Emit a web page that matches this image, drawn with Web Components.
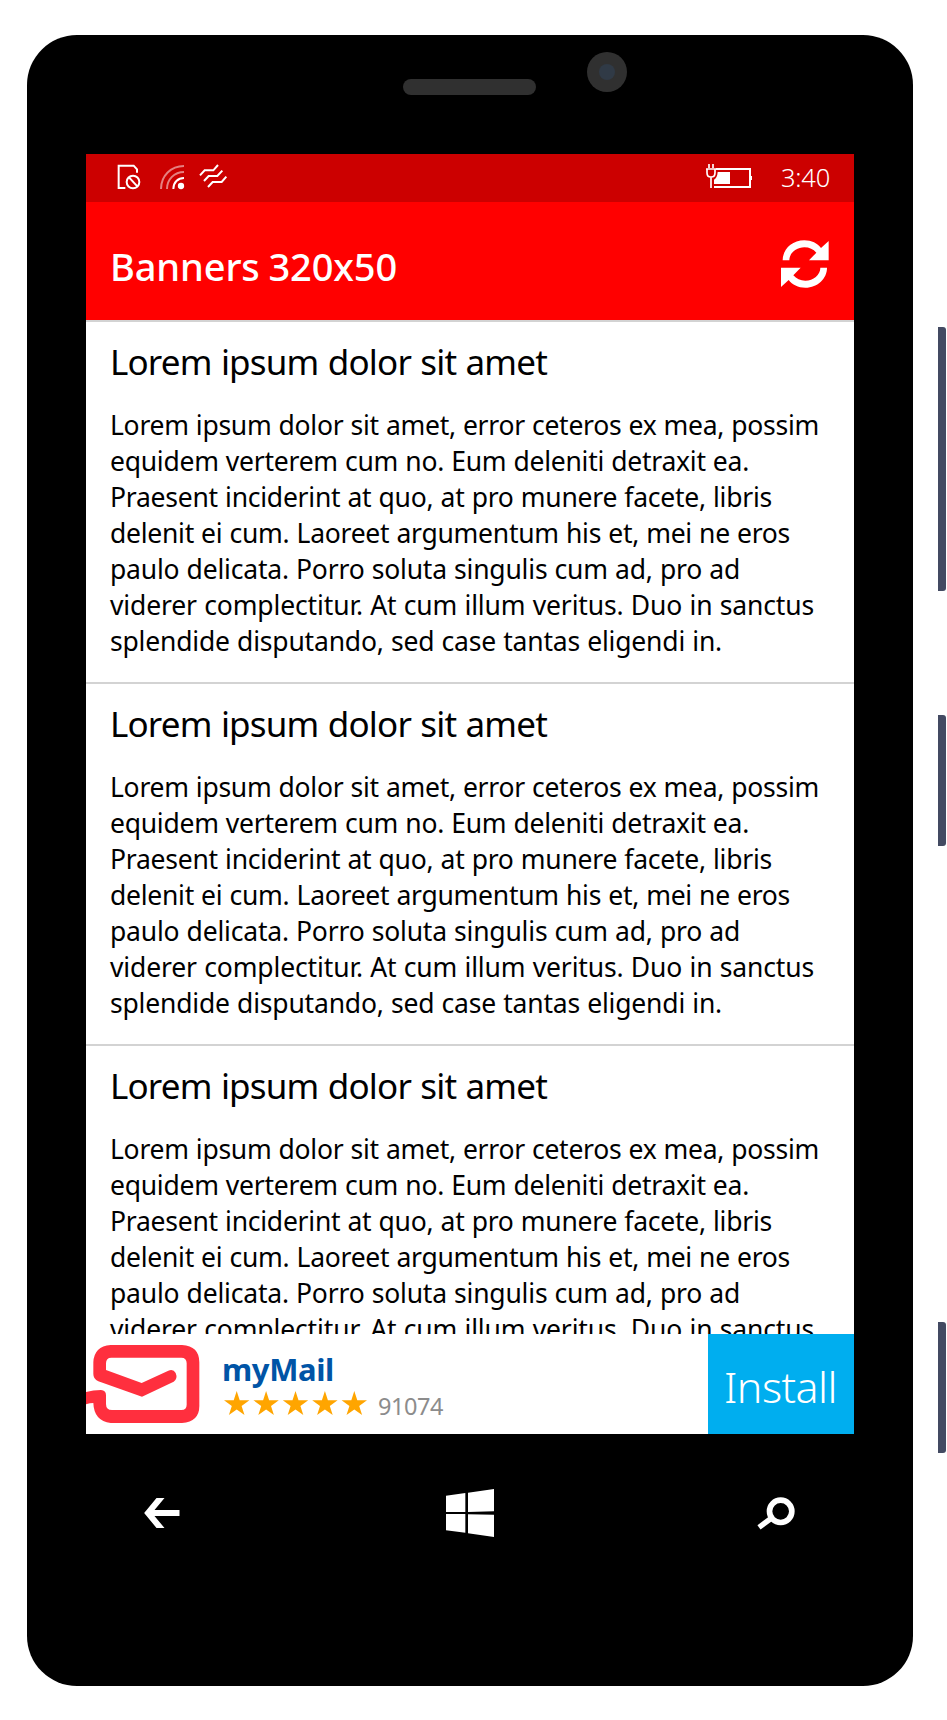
<!DOCTYPE html>
<html lang="en">
<head>
<meta charset="utf-8">
<title>Banners 320x50</title>
<style>
  body { margin: 0; background: #fff; font-family: "Noto Sans", "Open Sans", sans-serif; }
</style>
</head>
<body>
<phone-device>
  <status-bar></status-bar>
  <app-bar><fit-text width="287">Banners 320x50</fit-text></app-bar>
  <article-list>
    <article-card></article-card>
    <article-card></article-card>
    <article-card short></article-card>
  </article-list>
  <ad-banner>
    <fit-text slot="name" width="112">myMail</fit-text>
    <fit-text slot="votes" width="65">91074</fit-text>
    <fit-text slot="action" width="113">Install</fit-text>
  </ad-banner>
</phone-device>
<script>
function define(name, html, ready) {
  const template = document.createElement('template');
  template.innerHTML = html;
  customElements.define(name, class extends HTMLElement {
    constructor() {
      super();
      this.attachShadow({ mode: 'open' }).append(template.content.cloneNode(true));
    }
    connectedCallback() { if (ready) ready(this); }
  });
}

define('phone-device', `
  <style>
    :host { display: flex; align-items: flex-start; width: 947px; height: 1720px; box-sizing: border-box; padding: 35px 0 0 27px; overflow: hidden; }
    .body { width: 886px; height: 1651px; flex: none; border-radius: 50px; background: #000; display: flex; flex-direction: column; }
    .top { height: 119px; display: flex; align-items: flex-start; padding-left: 376px; flex: none; }
    .speaker { width: 133px; height: 16px; border-radius: 8px; background: #303030; margin-top: 44px; }
    .camera { width: 40px; height: 40px; border-radius: 50%; background: #303030; margin: 17px 0 0 51px; display: grid; place-items: center; }
    .camera i { width: 16px; height: 16px; border-radius: 50%; background: #303a46; }
    .screen { width: 768px; height: 1280px; margin-left: 59px; background: #fff; display: flex; flex-direction: column; overflow: hidden; flex: none; }
    .keys { width: 8px; margin-left: 25px; display: flex; flex-direction: column; padding-top: 292px; }
    .keys i { background: #434a62; border-radius: 0 3px 3px 0; height: 131px; }
    .keys i:nth-child(1) { height: 264px; }
    .keys i:nth-child(2) { margin: 124px 0 476px; }
  </style>
  <div class="body">
    <div class="top"><div class="speaker"></div><div class="camera"><i></i></div></div>
    <div class="screen"><slot></slot></div>
    <nav-keys></nav-keys>
  </div>
  <div class="keys"><i></i><i></i><i></i></div>`);

define('status-bar', `
  <style>
    :host { display: flex; height: 48px; flex: none; background: #c00; color: #fff; justify-content: space-between; }
    svg { display: block; flex: none; }
    .right { display: flex; }
    fit-text { font-size: 25.5px; line-height: 36px; margin: 5px 24px 0 28px; font-weight: 350; }
  </style>
  <svg width="150" height="48" viewBox="18 27 450 144" fill="none" stroke="#fff" stroke-width="6">
    <path d="M136 129H116V62H161L171 73V83"/>
    <circle cx="159" cy="111" r="19"/><path d="M147 97L172 124"/>
    <g stroke-width="6"><path d="M280 132C280 112 294 99 312 99"/><g opacity=".5"><path d="M261 132C261 103 283 81 312 81"/><path d="M243 132C243 92 273 63 312 63"/></g></g>
    <circle cx="303" cy="123" r="9.500" fill="#fff" stroke="none"/>
    <path d="M360 91L374 76H400L414 60M372 108L386 93H412L427 77M384 126L398 111H425L439 95"/>
  </svg>
  <div class="right">
    <svg width="48" height="48" viewBox="45 12 144 144" fill="none" stroke="#fff" stroke-width="6">
      <path d="M78 57H180V111H72"/><path d="M183 78V90" />
      <path d="M120 66V102H72V89Q82 83 83 66Z" fill="#fff" stroke="none"/>
      <path d="M57 42V54M69 42V54M48 57H78M51 57V68Q51 81 63 81Q75 81 75 68V57M63 81V114" stroke-width="5"/>
    </svg>
    <fit-text width="49">3:40</fit-text>
  </div>`);

define('app-bar', `
  <style>
    :host { display: flex; height: 118px; flex: none; box-sizing: border-box; padding: 23px 25px 0 24px; justify-content: space-between; background: #f00; color: #fff; }
    .title { margin-top: 16px; font-size: 38px; line-height: 50px; font-weight: 550; word-spacing: -1px; }
    svg { display: block; margin-top: 15px; }
  </style>
  <div class="title"><slot></slot></div>
  <svg width="48" height="48" viewBox="273 271 144 144" fill="#fff"><defs><path id="a" d="M278 332C278 300 305 272 343 272C365 272 382 281 393 295L416 274V332H357L379 309C370 299 358 293 343 293C319 293 298 310 298 332Z"/></defs><use href="#a"/><use href="#a" transform="rotate(180 344.500 343)"/></svg>`);

define('article-list', `
  <style>:host { display: block; flex: 1; min-height: 0; overflow: hidden; border-top: 2px solid #d3d3d3; color: #000; }</style>
  <slot></slot>`);

define('article-card', `
  <style>
    :host { display: block; box-sizing: border-box; height: 362px; padding: 16px 24px 0; border-bottom: 2px solid #d3d3d3; }
    :host([short]) .last { display: none; }
    .title { font-size: 35px; line-height: 48px; margin-bottom: 21px; word-spacing: 1px; font-weight: 380; }
    .text { font-size: 26.5px; line-height: 36px; word-spacing: .5px; }
  </style>
  <div class="title"><fit-text width="437">Lorem ipsum dolor sit amet</fit-text></div>
  <div class="text">
    <fit-text width="709">Lorem ipsum dolor sit amet, error ceteros ex mea, possim</fit-text>
    <fit-text width="639">equidem verterem cum no. Eum deleniti detraxit ea.</fit-text>
    <fit-text width="662">Praesent inciderint at quo, at pro munere facete, libris</fit-text>
    <fit-text width="680">delenit ei cum. Laoreet argumentum his et, mei ne eros</fit-text>
    <fit-text width="630">paulo delicata. Porro soluta singulis cum ad, pro ad</fit-text>
    <fit-text width="704">viderer complectitur. At cum illum veritus. Duo in sanctus</fit-text>
    <fit-text class="last" width="612">splendide disputando, sed case tantas eligendi in.</fit-text>
  </div>`);

define('ad-banner', `
  <style>
    :host { display: flex; height: 100px; flex: none; background: #fff; }
    .logo { flex: none; }
    .info { flex: 1; padding-left: 17px; }
    .name { font-size: 31px; line-height: 40px; font-weight: 700; color: #0054a6; padding-top: 15px; }
    .rating { display: flex; margin-top: 1px; }
    .rating svg { margin: 1px 11px 0 2px; flex: none; }
    .votes { font-size: 23.500px; line-height: 32px; color: #8c8c8c; }
    .action { width: 146px; box-sizing: border-box; padding: 23px 0 0 16px; background: #00aeef; color: #fff; font-size: 43px; line-height: 60px; font-weight: 350; }
  </style>
  <svg class="logo" width="119" height="100" viewBox="18 42 357 300" fill="#ff2f3e">
    <path fill-rule="evenodd" d="M92 75H306Q358 78 358 127V258Q358 305 306 309H92Q42 303 40 249Q30 249 18 253V216Q40 210 63 210Q78 211 78 226V252Q78 270 96 270H304Q320 270 320 254V130Q320 113 304 113H94Q78 113 78 130V150L185 189L265 152Q280 146 287 159Q294 176 281 185L186 230L55 184Q40 178 40 162V127Q42 79 92 75Z"/>
  </svg>
  <div class="info">
    <div class="name"><slot name="name"></slot></div>
    <div class="rating">
      <svg width="143" height="24" viewBox="0 0 143 24" fill="#ffa500"><defs><path id="s" d="M12.700 0L15.700 9.200H25.400L17.600 14.900L20.500 24L12.700 18.400L4.900 24L7.800 14.900L0 9.200H9.700Z"/></defs><use href="#s"/><use href="#s" x="29.400"/><use href="#s" x="58.800"/><use href="#s" x="88.200"/><use href="#s" x="117.600"/></svg>
      <div class="votes"><slot name="votes"></slot></div>
    </div>
  </div>
  <div class="action"><slot name="action"></slot></div>`);

define('nav-keys', `
  <style>
    :host { display: flex; justify-content: space-between; align-items: center; height: 48px; padding: 55px 118px 0 117px; }
    svg { display: block; flex: none; }
    .home { margin-left: 2px; }
  </style>
  <svg width="36" height="30" viewBox="71 84 107 90" fill="#fff"><path d="M71 129L108 84H132L102 120H177V138H102L132 174H108Z"/></svg>
  <svg class="home" width="48" height="48" viewBox="978 57 144 144" fill="#fff"><path d="M978 77L1036 69V126H978ZM1044 68L1122 57V124L1044 126ZM978 132H1036V188L978 181ZM1044 133L1122 134V201L1044 190Z"/></svg>
  <svg width="38" height="33" viewBox="112 116 114 99" fill="none" stroke="#fff"><circle cx="183" cy="159" r="33.500" stroke-width="17"/><path d="M160 176L118 207" stroke-width="16"/></svg>`);

/* One line of text, tracked so that it spans the given width. */
define('fit-text', `
  <style>:host { display: block; white-space: nowrap; } span { display: inline-block; }</style>
  <span><slot></slot></span>`, host => {
    const span = host.shadowRoot.querySelector('span');
    span.style.letterSpacing = '0';
    const natural = span.getBoundingClientRect().width;
    const target = Number(host.getAttribute('width'));
    if (natural) span.style.letterSpacing = (target - natural) / host.textContent.length + 'px';
  });
</script>
</body>
</html>
